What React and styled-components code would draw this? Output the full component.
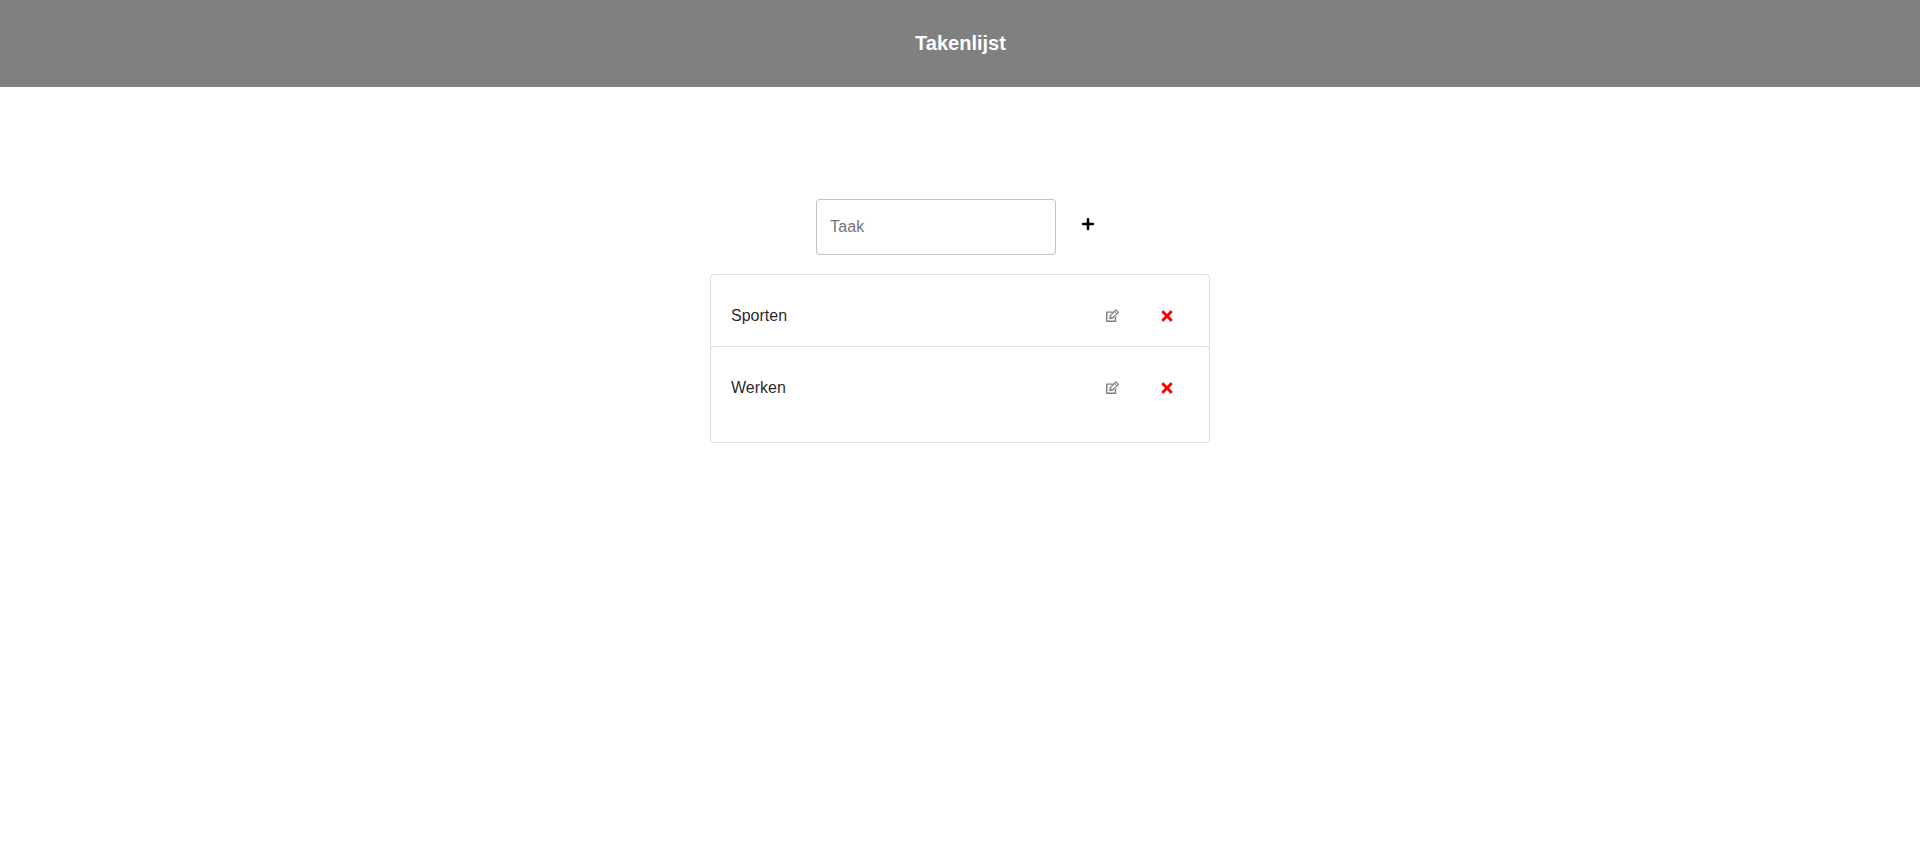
import React from "react";
import styled, { createGlobalStyle } from "styled-components";
import { FaPlus, FaTimes } from "react-icons/fa";

const GlobalStyle = createGlobalStyle`
  * { box-sizing: border-box; }
  body {
    margin: 0;
    background: #fff;
    font-family: Arial, "Liberation Sans", sans-serif;
    font-size: 16px;
  }
`;

const Header = styled.header`
  display: flex;
  justify-content: center;
  height: 87px;
  padding: 32px 0 0 1px;
  background: #808080;
`;

const Title = styled.h1`
  margin: 0;
  color: #fff;
  font-size: 20px;
  line-height: 23px;
  font-weight: 700;
`;

const Main = styled.main`
  display: flex;
  flex-direction: column;
  align-items: center;
  padding-top: 112px;
`;

const Form = styled.form`
  display: flex;
  align-items: flex-start;
  gap: 25px;
  width: 288px;
  margin-bottom: 19px;
`;

const TaskInput = styled.input`
  flex: none;
  width: 240px;
  height: 56px;
  padding: 0 13px;
  border: 1px solid rgba(0, 0, 0, 0.23);
  border-radius: 4px;
  outline: none;
  color: rgba(0, 0, 0, 0.87);
  font: inherit;
  letter-spacing: 0.15px;
  &::placeholder {
    color: #757575;
    opacity: 1;
  }
`;

const IconButton = styled.button`
  display: flex;
  padding: 0;
  border: 0;
  background: none;
  color: ${(p) => p.$color};
  font-size: ${(p) => p.$size || 14}px;
`;

const AddButton = styled(IconButton)`
  margin-top: 18px;
`;

const List = styled.ul`
  width: 500px;
  margin: 0;
  padding: 0;
  list-style: none;
`;

const TaskCard = styled.li`
  position: relative;
  display: flex;
  align-items: flex-start;
  height: 97px;
  padding: 32px 34px 0 20px;
  border: 1px solid rgba(0, 0, 0, 0.12);
  border-radius: 4px;
  background: #fff;
  & + & {
    margin-top: -25px;
  }
`;

const TaskName = styled.span`
  flex: 1;
  color: rgba(0, 0, 0, 0.87);
  line-height: 18px;
`;

const Actions = styled.div`
  display: flex;
  align-items: center;
  gap: 40px;
  height: 18px;
`;

const EditIcon = () => (
  <svg width="13" height="14" viewBox="0 0 13 14" fill="none" stroke="currentColor">
    <path d="M7.6 3.1H.7v9.2h8.8V7.7" strokeWidth="1.45" />
    <path d="M3.8 9.5l.5-2.9L10 1l2.4 2.4-5.7 5.6z" strokeWidth="1.3" strokeLinejoin="round" />
    <path d="M8.6 2.5l2.3 2.3M4.6 7.2l1.6 1.6" strokeWidth=".9" />
  </svg>
);

const tasks = ["Sporten", "Werken"];

export default function App() {
  return (
    <>
      <GlobalStyle />
      <Header>
        <Title>Takenlijst</Title>
      </Header>
      <Main>
        <Form>
          <TaskInput placeholder="Taak" />
          <AddButton type="button" $color="#000" aria-label="Toevoegen">
            <FaPlus />
          </AddButton>
        </Form>
        <List>
          {tasks.map((task) => (
            <TaskCard key={task}>
              <TaskName>{task}</TaskName>
              <Actions>
                <IconButton $color="#808080" aria-label="Bewerken">
                  <EditIcon />
                </IconButton>
                <IconButton $color="#f00" $size={16} aria-label="Verwijderen">
                  <FaTimes />
                </IconButton>
              </Actions>
            </TaskCard>
          ))}
        </List>
      </Main>
    </>
  );
}
